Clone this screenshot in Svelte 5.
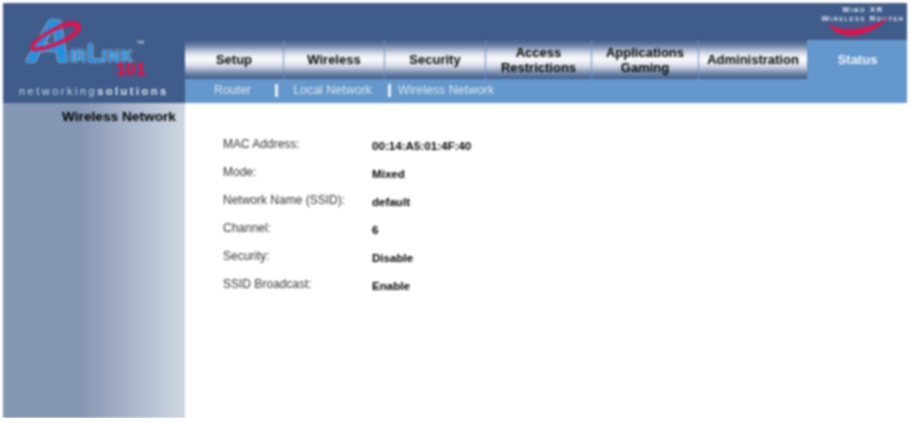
<script>
  const tabs = [
    { label: ["Setup"], width: 99 },
    { label: ["Wireless"], width: 101 },
    { label: ["Security"], width: 101 },
    { label: ["Access", "Restrictions"], width: 106 },
    { label: ["Applications", "Gaming"], width: 107 },
    { label: ["Administration"], width: 109 },
    { label: ["Status"], width: 99, active: true }
  ];

  const rows = [
    ["MAC Address:", "00:14:A5:01:4F:40"],
    ["Mode:", "Mixed"],
    ["Network Name (SSID):", "default"],
    ["Channel:", "6"],
    ["Security:", "Disable"],
    ["SSID Broadcast:", "Enable"]
  ];
</script>

<div class="page">
  <header>
    <div class="brand">
      <svg class="logo" width="160" height="78" viewBox="0 0 160 78">
        <g class="glow">
          <text x="24" y="59" class="big">A</text>
          <text x="67" y="59" class="mid">IR</text>
          <text x="84" y="59" class="lg">L</text>
          <text x="99" y="59" class="mid wide">INK</text>
        </g>
        <path d="M28 47 C24 39 44 27 60 20 C70 16 77 18 78 24 C79 32 58 43 40 47 C35 48 30 49 28 47Z M32 44 C38 45 56 39 68 31 C74 27 74 23 68 23 C58 24 42 32 35 39 C33 41 31 43 32 44Z" fill="#e0124c" fill-rule="evenodd" />
        <text x="133" y="43" class="tm">™</text>
        <text x="113" y="72" class="num">101</text>
      </svg>
      <div class="tagline">networking<b>solutions</b></div>
    </div>

    <div class="nav">
      <div class="top">
        <div class="badge">
          <span>Mimo XR</span>
          <span>Wireless Router</span>
          <svg width="70" height="30" viewBox="0 0 70 30">
            <path d="M6 15 C9 24 22 28 34 26 C47 24 59 16 66 8 C56 14 44 19 32 20 C22 21 12 19 6 15Z" fill="#e0124c" />
          </svg>
        </div>
      </div>

      <div class="tabs" style="grid-template-columns: {tabs.map((t) => t.width + 'px').join(' ')}">
        {#each tabs as tab}
          <div class="tab" class:active={tab.active}>
            {#each tab.label as line}
              <span>{line}</span>
            {/each}
          </div>
        {/each}
      </div>

      <div class="subnav">
        <span class="router">Router</span>
        <i></i>
        <span class="local">Local Network</span>
        <i></i>
        <span class="wlan">Wireless Network</span>
      </div>
    </div>
  </header>

  <div class="body">
    <aside>Wireless Network</aside>
    <main>
      <div class="info">
        {#each rows as row}
          <div class="label">{row[0]}</div>
          <div class="value">{row[1]}</div>
        {/each}
      </div>
    </main>
  </div>
</div>

<style>
  :global(body) {
    margin: 0;
    background: #fff;
  }
  .page {
    width: 904px;
    height: 415px;
    margin: 3px 0 0 3px;
    display: flex;
    flex-direction: column;
    font-family: "Liberation Sans", Arial, sans-serif;
    filter: blur(0.8px);
  }
  header {
    display: flex;
    height: 100px;
    background: #3f5c8a;
  }
  .brand {
    width: 182px;
    flex: none;
    position: relative;
  }
  .logo {
    position: absolute;
    left: 0;
    top: 0;
  }
  .glow {
    filter: drop-shadow(0 0 1px #fff);
  }
  .big {
    font: italic bold 62px "Liberation Sans", sans-serif;
    fill: #2490e0;
  }
  .mid {
    font: bold 16px "Liberation Sans", sans-serif;
    fill: #2490e0;
  }
  .wide {
    letter-spacing: 1.5px;
  }
  .lg {
    font: bold 25px "Liberation Sans", sans-serif;
    fill: #2490e0;
  }
  .tm {
    font: 8px "Liberation Sans", sans-serif;
    fill: #e6ecf4;
  }
  .num {
    font: bold 17px "Liberation Sans", sans-serif;
    letter-spacing: 0.5px;
    fill: #f00c46;
    stroke: #f00c46;
    stroke-width: 0.4px;
  }
  .tagline {
    position: absolute;
    left: 16px;
    top: 82px;
    color: #cfd8e6;
    font-size: 11px;
    letter-spacing: 2.5px;
    white-space: nowrap;
  }
  .tagline b {
    color: #e4eaf2;
  }
  .nav {
    flex: 1;
    display: flex;
    flex-direction: column;
  }
  .top {
    height: 37px;
    position: relative;
  }
  .badge {
    position: absolute;
    right: 2px;
    top: 2px;
    width: 84px;
    text-align: center;
    color: #e6ecf4;
    font-size: 8px;
    font-weight: bold;
    letter-spacing: 1.4px;
    line-height: 9px;
    font-variant: small-caps;
  }
  .badge span {
    display: block;
    white-space: nowrap;
    position: relative;
  }
  .badge svg {
    position: absolute;
    left: 2px;
    top: 4px;
  }
  .tabs {
    display: grid;
    height: 39px;
  }
  .tab {
    display: flex;
    flex-direction: column;
    align-items: center;
    justify-content: center;
    font-size: 13px;
    font-weight: bold;
    line-height: 15px;
    color: #000;
    border-right: 1px solid #6a93c4;
    box-sizing: border-box;
    background: linear-gradient(#3f5c8a 0%, #6d82a6 14%, #dfe4ec 36%, #fbfbfc 50%, #d7dde7 66%, #6f84a8 86%, #41598a 100%);
  }
  .tab.active {
    background: #6497cb;
    color: #f4f7fb;
    border-right: 0;
  }
  .subnav {
    flex: 1;
    background: #6497cb;
    display: flex;
    align-items: center;
    padding-left: 29px;
    padding-bottom: 2px;
    color: #dbe7f3;
    font-size: 12.4px;
  }
  .subnav i {
    width: 3px;
    height: 13px;
    background: #e8f0f8;
  }
  .router {
    margin-right: 24px;
  }
  .local {
    margin-left: 15px;
    margin-right: 16px;
  }
  .wlan {
    margin-left: 7px;
  }
  .body {
    flex: 1;
    display: flex;
  }
  aside {
    width: 182px;
    flex: none;
    box-sizing: border-box;
    padding: 6px 9px 0 0;
    text-align: right;
    font-size: 13.7px;
    font-weight: bold;
    color: #000;
    background: linear-gradient(90deg, #8596b3 0%, #8596b3 42%, #cfd7e3 100%);
  }
  main {
    flex: 1;
    padding: 27px 0 0 38px;
  }
  .info {
    display: grid;
    grid-template-columns: 149px 1fr;
    grid-auto-rows: 28px;
  }
  .label {
    font-size: 12px;
    line-height: 28px;
    color: #333;
  }
  .value {
    font-size: 11.6px;
    font-weight: bold;
    line-height: 28px;
    margin-top: 2px;
    color: #000;
  }
</style>
